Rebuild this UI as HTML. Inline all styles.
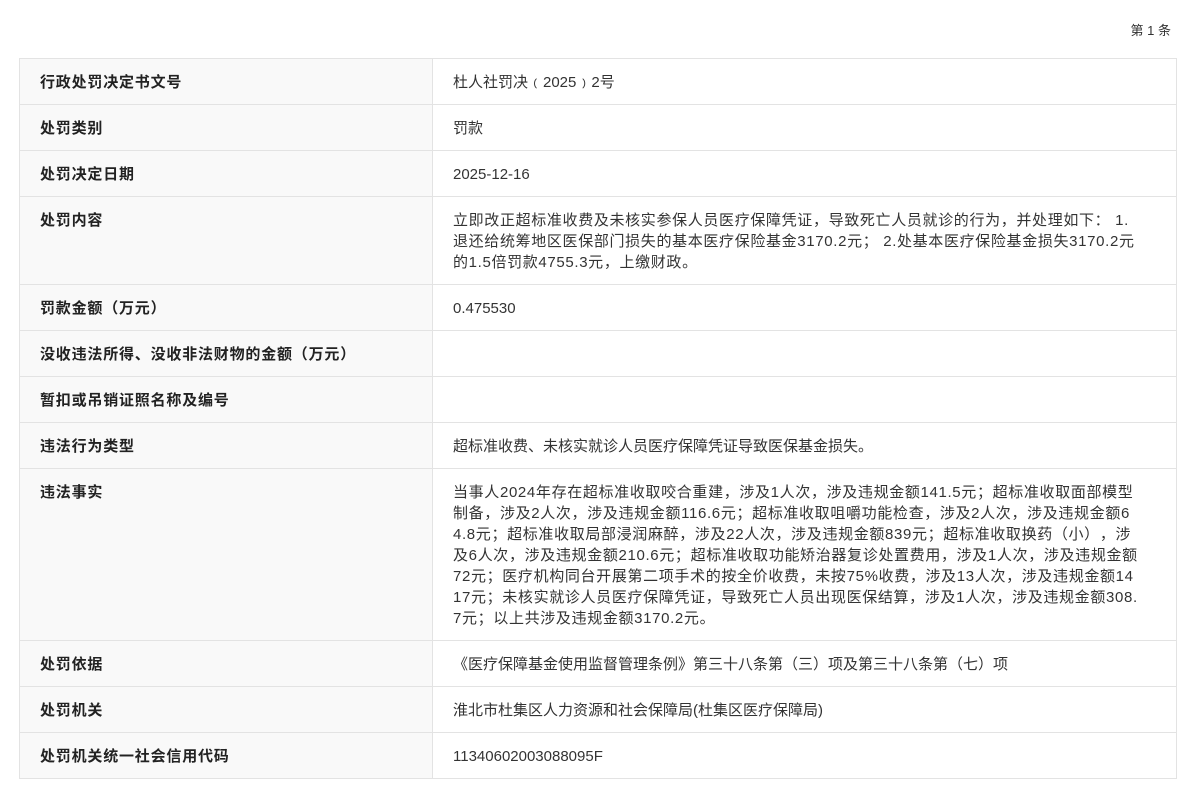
<!DOCTYPE html>
<html><head><meta charset="utf-8"><style>
body{margin:0;background:#fff;font-family:"Liberation Sans","Noto Sans CJK SC",sans-serif;color:#333;font-size:15px;text-spacing-trim:space-all;font-feature-settings:"chws" 0,"halt" 0;}
.top{position:absolute;right:20px;top:21px;font-size:13px;line-height:20px;}
table{position:absolute;left:19px;top:58px;width:1158px;border-collapse:collapse;table-layout:fixed;}
td{border:1px solid #e3e3e3;padding:13px 20px 11px;line-height:21px;vertical-align:top;white-space:nowrap;overflow:hidden;}
td.l{width:372px;background:#f9f9f9;font-weight:bold;color:#222;letter-spacing:0.8px;}
tr{height:46px;}
.w{letter-spacing:0.65px;}
</style></head><body>
<div class="top">第 1 条</div>
<table>
<tr><td class="l">行政处罚决定书文号</td><td>杜人社罚决﹙2025﹚2号</td></tr>
<tr><td class="l">处罚类别</td><td>罚款</td></tr>
<tr><td class="l">处罚决定日期</td><td>2025-12-16</td></tr>
<tr style="height:88px"><td class="l">处罚内容</td><td class="w">立即改正超标准收费及未核实参保人员医疗保障凭证，导致死亡人员就诊的行为，并处理如下： 1.<br>退还给统筹地区医保部门损失的基本医疗保险基金3170.2元； 2.处基本医疗保险基金损失3170.2元<br>的1.5倍罚款4755.3元，上缴财政。</td></tr>
<tr><td class="l">罚款金额（万元）</td><td>0.475530</td></tr>
<tr><td class="l">没收违法所得、没收非法财物的金额（万元）</td><td></td></tr>
<tr><td class="l">暂扣或吊销证照名称及编号</td><td></td></tr>
<tr><td class="l">违法行为类型</td><td>超标准收费、未核实就诊人员医疗保障凭证导致医保基金损失。</td></tr>
<tr style="height:172px"><td class="l">违法事实</td><td class="w">当事人2024年存在超标准收取咬合重建，涉及1人次，涉及违规金额141.5元；超标准收取面部模型<br>制备，涉及2人次，涉及违规金额116.6元；超标准收取咀嚼功能检查，涉及2人次，涉及违规金额6<br>4.8元；超标准收取局部浸润麻醉，涉及22人次，涉及违规金额839元；超标准收取换药（小），涉<br>及6人次，涉及违规金额210.6元；超标准收取功能矫治器复诊处置费用，涉及1人次，涉及违规金额<br>72元；医疗机构同台开展第二项手术的按全价收费，未按75%收费，涉及13人次，涉及违规金额14<br>17元；未核实就诊人员医疗保障凭证，导致死亡人员出现医保结算，涉及1人次，涉及违规金额308.<br>7元；以上共涉及违规金额3170.2元。</td></tr>
<tr><td class="l">处罚依据</td><td>《医疗保障基金使用监督管理条例》第三十八条第（三）项及第三十八条第（七）项</td></tr>
<tr><td class="l">处罚机关</td><td>淮北市杜集区人力资源和社会保障局(杜集区医疗保障局)</td></tr>
<tr><td class="l">处罚机关统一社会信用代码</td><td>11340602003088095F</td></tr>
</table>
</body></html>
